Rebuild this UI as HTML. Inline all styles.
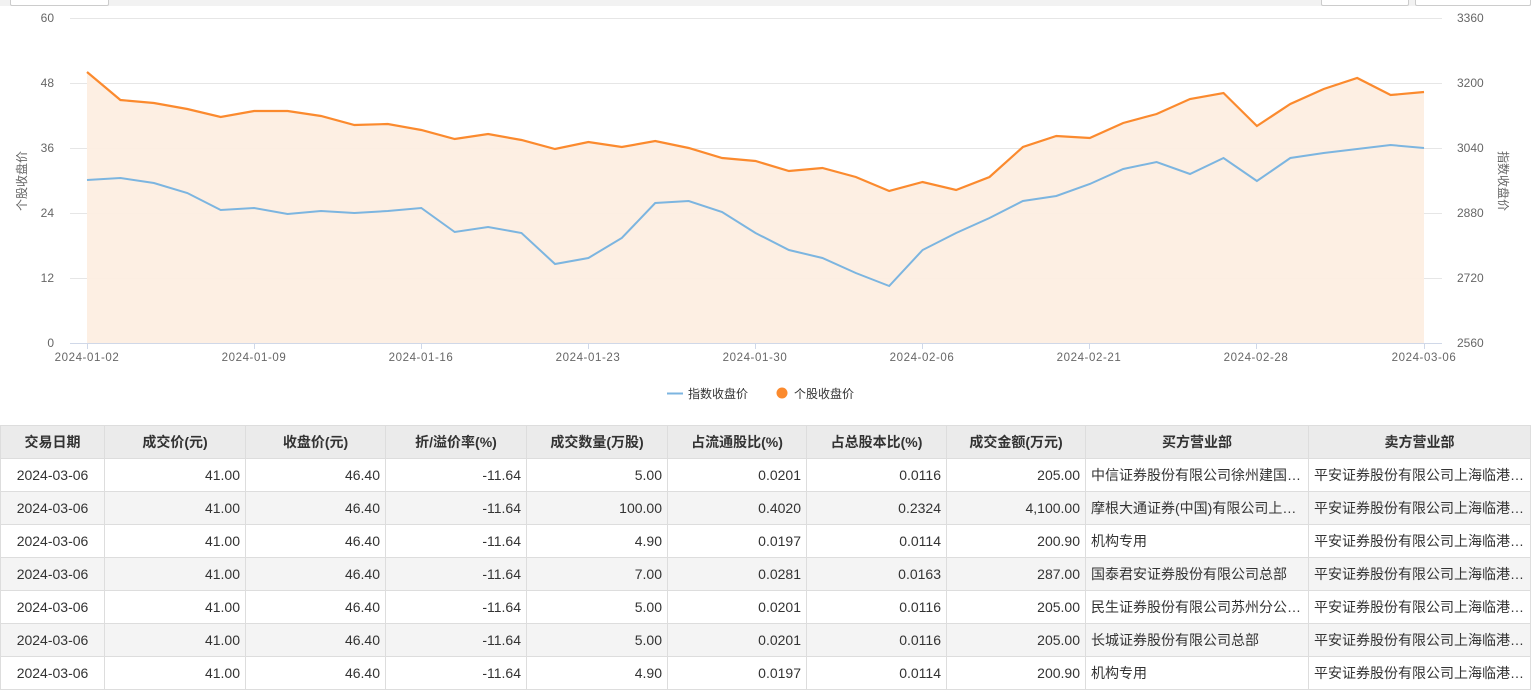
<!DOCTYPE html>
<html><head><meta charset="utf-8"><style>
body{margin:0;width:1531px;height:690px;overflow:hidden;background:#fff;font-family:"Liberation Sans","Noto Sans CJK SC",sans-serif;}
.top{position:absolute;left:0;top:0;width:1531px;height:6px;background:#f2f2f2;}
.btn{position:absolute;top:-2px;height:6px;border:1px solid #ccc;background:#fff;border-radius:2px;}
svg{position:absolute;left:0;top:0;}
table{position:absolute;left:0;top:425px;border-collapse:collapse;width:1531px;font-size:14px;color:#333;table-layout:fixed;}
th{background:#ebebeb;height:32px;padding:0;font-weight:bold;border:1px solid #ddd;color:#333;font-size:14px}
td{height:32px;border:1px solid #ddd;padding:0 5px;white-space:nowrap;overflow:hidden;text-overflow:ellipsis;}
tr:nth-child(odd) td{background:#f4f4f4}
td.r{text-align:right}td.c{text-align:center}
</style></head><body>
<div class="top"></div>
<div class="btn" style="left:10px;width:97px"></div>
<div class="btn" style="left:1321px;width:86px"></div>
<div class="btn" style="left:1415px;width:114px"></div>
<svg width="1531" height="420" font-family="Liberation Sans, Noto Sans CJK SC, sans-serif">
<g stroke="#e6e6e6" stroke-width="1">
<line x1="70" x2="1442" y1="18.5" y2="18.5"/><line x1="70" x2="1442" y1="83.5" y2="83.5"/><line x1="70" x2="1442" y1="148.5" y2="148.5"/><line x1="70" x2="1442" y1="213.5" y2="213.5"/><line x1="70" x2="1442" y1="278.5" y2="278.5"/>
</g>
<path fill="#fdeee2" opacity="0.95" d="M87,72 L120.4,100 153.9,103 187.3,109 220.7,117 254.1,111 287.6,111 321,116 354.4,125 387.8,124 421.3,130 454.7,139 488.1,134 521.5,140 555,149 588.4,142 621.8,147 655.2,141 688.7,148 722.1,158 755.5,161 788.9,171 822.4,168 855.8,177 889.2,191 922.6,182 956.1,190 989.5,177 1022.9,147 1056.3,136 1089.8,138 1123.2,123 1156.6,114 1190,99 1223.5,93 1256.9,126 1290.3,104 1323.7,89 1357.2,78 1390.6,95 1424,92 L1424,343 L87,343Z"/>
<line x1="70" x2="1442" y1="343.5" y2="343.5" stroke="#d0d8e8"/>
<g stroke="#d0d8e8"><line x1="87.5" x2="87.5" y1="343" y2="349"/><line x1="254.5" x2="254.5" y1="343" y2="349"/><line x1="421.5" x2="421.5" y1="343" y2="349"/><line x1="588.5" x2="588.5" y1="343" y2="349"/><line x1="755.5" x2="755.5" y1="343" y2="349"/><line x1="922.5" x2="922.5" y1="343" y2="349"/><line x1="1089.5" x2="1089.5" y1="343" y2="349"/><line x1="1256.5" x2="1256.5" y1="343" y2="349"/><line x1="1424.5" x2="1424.5" y1="343" y2="349"/></g>
<polyline fill="none" stroke="#fb8a2e" stroke-width="2.2" points="87,72 120.4,100 153.9,103 187.3,109 220.7,117 254.1,111 287.6,111 321,116 354.4,125 387.8,124 421.3,130 454.7,139 488.1,134 521.5,140 555,149 588.4,142 621.8,147 655.2,141 688.7,148 722.1,158 755.5,161 788.9,171 822.4,168 855.8,177 889.2,191 922.6,182 956.1,190 989.5,177 1022.9,147 1056.3,136 1089.8,138 1123.2,123 1156.6,114 1190,99 1223.5,93 1256.9,126 1290.3,104 1323.7,89 1357.2,78 1390.6,95 1424,92"/>
<polyline fill="none" stroke="#7cb5e0" stroke-width="2" points="87,180 120.4,178 153.9,183 187.3,193 220.7,210 254.1,208 287.6,214 321,211 354.4,213 387.8,211 421.3,208 454.7,232 488.1,227 521.5,233 555,264 588.4,258 621.8,238 655.2,203 688.7,201 722.1,212 755.5,233 788.9,250 822.4,258 855.8,273 889.2,286 922.6,250 956.1,233 989.5,218 1022.9,201 1056.3,196 1089.8,184 1123.2,169 1156.6,162 1190,174 1223.5,158 1256.9,181 1290.3,158 1323.7,153 1357.2,149 1390.6,145 1424,148"/>
<g font-size="12" fill="#666" text-anchor="end">
<text x="54" y="22">60</text><text x="54" y="87">48</text><text x="54" y="152">36</text><text x="54" y="217">24</text><text x="54" y="282">12</text><text x="54" y="347">0</text>
</g>
<g font-size="12" fill="#666">
<text x="1457" y="22">3360</text><text x="1457" y="87">3200</text><text x="1457" y="152">3040</text><text x="1457" y="217">2880</text><text x="1457" y="282">2720</text><text x="1457" y="347">2560</text>
</g>
<g font-size="11.5" fill="#666" text-anchor="middle" letter-spacing="0.6">
<text x="87" y="361">2024-01-02</text><text x="254" y="361">2024-01-09</text><text x="421" y="361">2024-01-16</text><text x="588" y="361">2024-01-23</text><text x="755" y="361">2024-01-30</text><text x="922" y="361">2024-02-06</text><text x="1089" y="361">2024-02-21</text><text x="1256" y="361">2024-02-28</text><text x="1424" y="361">2024-03-06</text>
</g>
<text font-size="12" fill="#666" transform="translate(26,181) rotate(-90)" text-anchor="middle">个股收盘价</text>
<text font-size="12" fill="#666" transform="translate(1499,181) rotate(90)" text-anchor="middle">指数收盘价</text>
<line x1="667" x2="683" y1="393.5" y2="393.5" stroke="#7cb5e0" stroke-width="2"/>
<text x="688" y="398" font-size="12" fill="#333">指数收盘价</text>
<circle cx="782" cy="393" r="5.5" fill="#fb8a2e"/>
<text x="794" y="398" font-size="12" fill="#333">个股收盘价</text>
</svg>
<table>
<colgroup><col style="width:104px"><col style="width:141px"><col style="width:140px"><col style="width:141px"><col style="width:141px"><col style="width:139px"><col style="width:140px"><col style="width:139px"><col style="width:223px"><col></colgroup>
<tr><th>交易日期</th><th>成交价(元)</th><th>收盘价(元)</th><th>折/溢价率(%)</th><th>成交数量(万股)</th><th>占流通股比(%)</th><th>占总股本比(%)</th><th>成交金额(万元)</th><th>买方营业部</th><th>卖方营业部</th></tr>
<tr><td class="c">2024-03-06</td><td class="r">41.00</td><td class="r">46.40</td><td class="r">-11.64</td><td class="r">5.00</td><td class="r">0.0201</td><td class="r">0.0116</td><td class="r">205.00</td><td>中信证券股份有限公司徐州建国路证券营业部</td><td>平安证券股份有限公司上海临港分公司</td></tr>
<tr><td class="c">2024-03-06</td><td class="r">41.00</td><td class="r">46.40</td><td class="r">-11.64</td><td class="r">100.00</td><td class="r">0.4020</td><td class="r">0.2324</td><td class="r">4,100.00</td><td>摩根大通证券(中国)有限公司上海分公司</td><td>平安证券股份有限公司上海临港分公司</td></tr>
<tr><td class="c">2024-03-06</td><td class="r">41.00</td><td class="r">46.40</td><td class="r">-11.64</td><td class="r">4.90</td><td class="r">0.0197</td><td class="r">0.0114</td><td class="r">200.90</td><td>机构专用</td><td>平安证券股份有限公司上海临港分公司</td></tr>
<tr><td class="c">2024-03-06</td><td class="r">41.00</td><td class="r">46.40</td><td class="r">-11.64</td><td class="r">7.00</td><td class="r">0.0281</td><td class="r">0.0163</td><td class="r">287.00</td><td>国泰君安证券股份有限公司总部</td><td>平安证券股份有限公司上海临港分公司</td></tr>
<tr><td class="c">2024-03-06</td><td class="r">41.00</td><td class="r">46.40</td><td class="r">-11.64</td><td class="r">5.00</td><td class="r">0.0201</td><td class="r">0.0116</td><td class="r">205.00</td><td>民生证券股份有限公司苏州分公司营业部</td><td>平安证券股份有限公司上海临港分公司</td></tr>
<tr><td class="c">2024-03-06</td><td class="r">41.00</td><td class="r">46.40</td><td class="r">-11.64</td><td class="r">5.00</td><td class="r">0.0201</td><td class="r">0.0116</td><td class="r">205.00</td><td>长城证券股份有限公司总部</td><td>平安证券股份有限公司上海临港分公司</td></tr>
<tr><td class="c">2024-03-06</td><td class="r">41.00</td><td class="r">46.40</td><td class="r">-11.64</td><td class="r">4.90</td><td class="r">0.0197</td><td class="r">0.0114</td><td class="r">200.90</td><td>机构专用</td><td>平安证券股份有限公司上海临港分公司</td></tr>
</table>
</body></html>
